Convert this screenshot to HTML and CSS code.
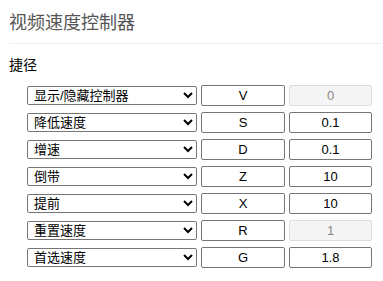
FILE: index.html
```html
<!DOCTYPE html>
<html lang="zh-CN">
<head>
  <meta charset="UTF-8" />
  <meta name="viewport" content="width=device-width, initial-scale=1.0"/>
  <title>视频速度控制器</title>
  <link rel="stylesheet" href="styles.css">
</head>
<body>
  <header>视频速度控制器</header>
  <h3>捷径</h3>
  <div class="shortcuts">
    <div class="row">
      <select><option>显示/隐藏控制器</option></select>
      <input class="key" type="text" value="V" />
      <input class="value" type="text" value="0" disabled />
    </div>
    <div class="row">
      <select><option>降低速度</option></select>
      <input class="key" type="text" value="S" />
      <input class="value" type="text" value="0.1" />
    </div>
    <div class="row">
      <select><option>增速</option></select>
      <input class="key" type="text" value="D" />
      <input class="value" type="text" value="0.1" />
    </div>
    <div class="row">
      <select><option>倒带</option></select>
      <input class="key" type="text" value="Z" />
      <input class="value" type="text" value="10" />
    </div>
    <div class="row">
      <select><option>提前</option></select>
      <input class="key" type="text" value="X" />
      <input class="value" type="text" value="10" />
    </div>
    <div class="row">
      <select><option>重置速度</option></select>
      <input class="key" type="text" value="R" />
      <input class="value" type="text" value="1" disabled />
    </div>
    <div class="row">
      <select><option>首选速度</option></select>
      <input class="key" type="text" value="G" />
      <input class="value" type="text" value="1.8" />
    </div>
  </div>
</body>
</html>
```

FILE: styles.css
```css
body {
  margin: 0;
  padding: 0 2px 0 9px;
  font-family: "Liberation Sans", "Noto Sans CJK SC", sans-serif;
  background: #fff;
  color: #000;
}

header {
  font-size: 18px;
  line-height: 24px;
  color: #555;
  margin-top: 11px;
  padding-bottom: 8px;
  border-bottom: 1px solid #eee;
}

h3 {
  font-size: 14px;
  font-weight: normal;
  line-height: 20px;
  margin: 11px 0 10px 0;
}

.shortcuts {
  display: flex;
  flex-direction: column;
  gap: 6px;
  padding-left: 18px;
}

.row {
  display: flex;
  align-items: center;
  gap: 4px;
}

select {
  width: 170px;
  height: 19px;
  font-family: "Liberation Sans", "Noto Sans CJK SC", sans-serif;
  font-size: 13px;
  border: 1px solid #767676;
  border-radius: 2px;
  padding: 0 2px;
  background: #fff;
  color: #000;
}

input {
  height: 21px;
  box-sizing: border-box;
  font-family: "Liberation Sans", "Noto Sans CJK SC", sans-serif;
  font-size: 13px;
  text-align: center;
  border: 1px solid #767676;
  border-radius: 2px;
  padding: 1px 2px;
  color: #000;
}

.key {
  width: 84px;
}

.value {
  width: 83px;
}

input:disabled {
  background: #f5f5f5;
  border-color: #ddd;
  color: #888;
}
```
